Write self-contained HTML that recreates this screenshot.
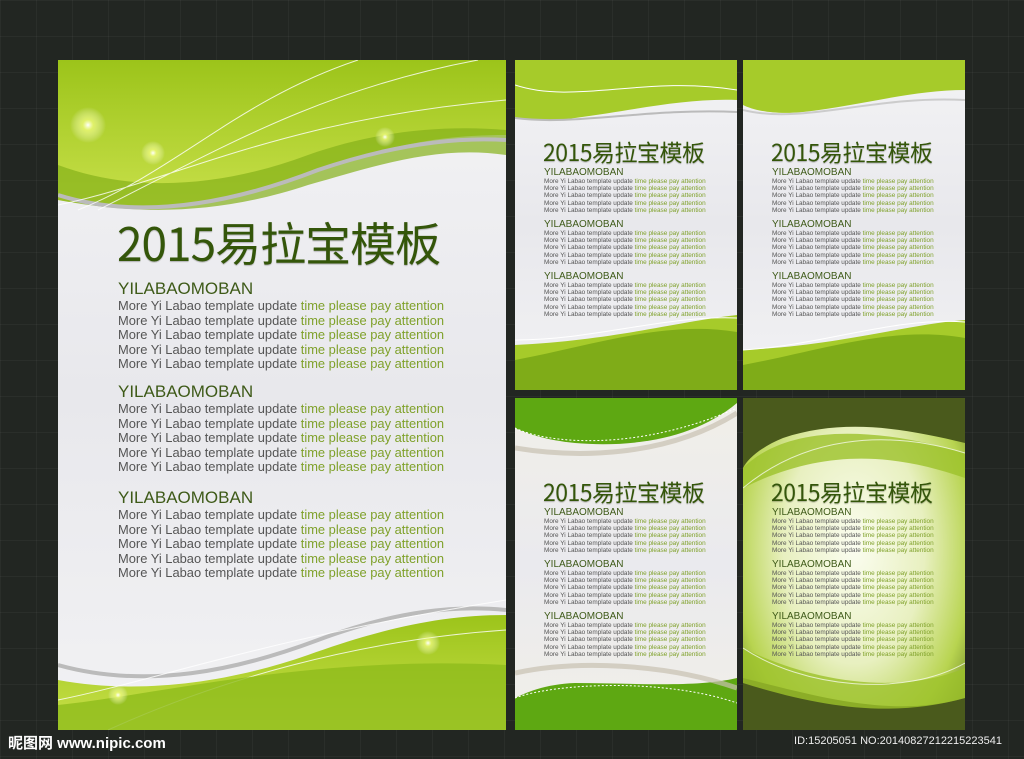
<!DOCTYPE html>
<html><head><meta charset="utf-8">
<style>
*{margin:0;padding:0}
body{width:1024px;height:759px;overflow:hidden;position:relative;font-family:"Liberation Sans","Noto Sans CJK SC",sans-serif;
background:#222622;
background-image:linear-gradient(90deg,rgba(255,255,255,.035) 1px,transparent 1px),linear-gradient(rgba(255,255,255,.035) 1px,transparent 1px);background-size:36px 36px;}
.p{position:absolute;overflow:hidden;background:linear-gradient(#f3f3f5,#e8e8ec 50%,#f2f2f4)}
.p svg{position:absolute;left:0;top:0;width:100%;height:100%}
.t{position:absolute;color:#34560a;font-family:"Noto Sans CJK SC",sans-serif;white-space:nowrap;
text-shadow:0 1px 1px rgba(0,0,0,.25)}
.b{position:absolute;white-space:nowrap}
.h{color:#3e5a18}
.l{color:#555}
.l span{color:#7fa12a}
.big .h{font-size:17px;line-height:20px}
.big .l{font-size:12.9px;line-height:14.6px}
.sm .h{font-size:10px;line-height:11px}
.sm .l{font-size:6.4px;line-height:7.2px}
.foot{position:absolute;color:#fff;font-size:15px;font-weight:bold;left:8px;top:732px}
.id{position:absolute;color:#eee;font-size:11px;right:22px;top:735px}
</style></head><body>

<div class="p big" style="left:58px;top:60px;width:448px;height:670px">
<svg viewBox="0 0 448 670" preserveAspectRatio="none">
<defs>
<linearGradient id="g1" x1="0" y1="0" x2="0" y2="1"><stop offset="0" stop-color="#9cc41a"/><stop offset="1" stop-color="#c8e04a"/></linearGradient>
<radialGradient id="gl"><stop offset="0" stop-color="#fff" stop-opacity="1"/><stop offset=".3" stop-color="#f4ff80" stop-opacity=".7"/><stop offset="1" stop-color="#fff" stop-opacity="0"/></radialGradient>
</defs>
<path d="M0 0H448V75C380 75 330 85 250 115C170 145 90 155 0 140Z" fill="url(#g1)"/>
<path d="M0 105C80 135 170 125 250 95C320 70 390 65 448 70V95C380 85 320 105 250 125C160 155 80 155 0 140Z" fill="#84b01a" opacity=".7"/>
<path d="M0 135C80 160 170 145 260 110C340 83 400 77 448 80" stroke="#bbb" stroke-width="4" fill="none"/>
<path d="M20 150C120 110 180 40 300 0M0 145C120 120 220 60 448 40M40 150C160 90 260 30 420 0" stroke="#fff" stroke-width="1" fill="none" opacity=".8"/>
<circle cx="30" cy="65" r="18" fill="url(#gl)"/><circle cx="95" cy="93" r="12" fill="url(#gl)"/><circle cx="327" cy="77" r="10" fill="url(#gl)"/>
<path d="M0 670H448V555C380 555 320 570 250 595C170 623 80 635 0 620Z" fill="url(#g1)"/>
<path d="M0 605C90 630 180 610 260 580C340 550 400 545 448 550" stroke="#bbb" stroke-width="4" fill="none"/>
<path d="M0 640C100 620 200 580 448 540M50 670C160 620 300 580 448 570" stroke="#fff" stroke-width="1" fill="none" opacity=".8"/>
<path d="M0 645C100 635 250 595 448 605V670H0Z" fill="#8fbb1c" opacity=".8"/>
<circle cx="370" cy="583" r="12" fill="url(#gl)"/><circle cx="60" cy="635" r="10" fill="url(#gl)"/>
</svg>
<div class="t" style="left:59px;top:149px;font-size:46px;letter-spacing:-1px">2015易拉宝模板</div>
<div class="b" style="left:60px;top:219px"><div class="h">YILABAOMOBAN</div>
<div class="l">More Yi Labao template update <span>time please pay attention</span><br>More Yi Labao template update <span>time please pay attention</span><br>More Yi Labao template update <span>time please pay attention</span><br>More Yi Labao template update <span>time please pay attention</span><br>More Yi Labao template update <span>time please pay attention</span></div></div>
<div class="b" style="left:60px;top:322px"><div class="h">YILABAOMOBAN</div>
<div class="l">More Yi Labao template update <span>time please pay attention</span><br>More Yi Labao template update <span>time please pay attention</span><br>More Yi Labao template update <span>time please pay attention</span><br>More Yi Labao template update <span>time please pay attention</span><br>More Yi Labao template update <span>time please pay attention</span></div></div>
<div class="b" style="left:60px;top:428px"><div class="h">YILABAOMOBAN</div>
<div class="l">More Yi Labao template update <span>time please pay attention</span><br>More Yi Labao template update <span>time please pay attention</span><br>More Yi Labao template update <span>time please pay attention</span><br>More Yi Labao template update <span>time please pay attention</span><br>More Yi Labao template update <span>time please pay attention</span></div></div>
</div>

<div class="p sm" style="left:515px;top:60px;width:222px;height:330px">
<svg viewBox="0 0 222 330" preserveAspectRatio="none">
<path d="M0 0H222V40C170 38 120 50 60 58C30 62 10 60 0 58Z" fill="#a6cb2a"/>
<path d="M0 25C60 45 130 15 222 30" stroke="#fff" fill="none"/>
<path d="M0 58C60 66 130 48 222 52" stroke="#bbb" stroke-width="2" fill="none"/>
<path d="M0 330H222V255C160 262 100 280 0 285Z" fill="#a6cb2a"/>
<path d="M0 300C80 285 150 260 222 272V330H0Z" fill="#7fac18"/>
<path d="M0 280C80 280 150 255 222 258" stroke="#fff" fill="none"/>
</svg>
<div class="t" style="left:28px;top:74px;font-size:23px;letter-spacing:-.5px">2015易拉宝模板</div>
<div class="b" style="left:29px;top:107px"><div class="h">YILABAOMOBAN</div><div class="l">More Yi Labao template update <span>time please pay attention</span><br>More Yi Labao template update <span>time please pay attention</span><br>More Yi Labao template update <span>time please pay attention</span><br>More Yi Labao template update <span>time please pay attention</span><br>More Yi Labao template update <span>time please pay attention</span></div></div>
<div class="b" style="left:29px;top:159px"><div class="h">YILABAOMOBAN</div><div class="l">More Yi Labao template update <span>time please pay attention</span><br>More Yi Labao template update <span>time please pay attention</span><br>More Yi Labao template update <span>time please pay attention</span><br>More Yi Labao template update <span>time please pay attention</span><br>More Yi Labao template update <span>time please pay attention</span></div></div>
<div class="b" style="left:29px;top:211px"><div class="h">YILABAOMOBAN</div><div class="l">More Yi Labao template update <span>time please pay attention</span><br>More Yi Labao template update <span>time please pay attention</span><br>More Yi Labao template update <span>time please pay attention</span><br>More Yi Labao template update <span>time please pay attention</span><br>More Yi Labao template update <span>time please pay attention</span></div></div>
</div>

<div class="p sm" style="left:743px;top:60px;width:222px;height:330px">
<svg viewBox="0 0 222 330" preserveAspectRatio="none">
<path d="M0 0H222V30C170 30 120 45 60 52C30 55 10 50 0 45Z" fill="#a6cb2a"/>
<path d="M0 50C60 65 130 35 222 40" stroke="#ccc" stroke-width="2" fill="none"/>
<path d="M0 330H222V260C160 265 100 285 0 290Z" fill="#a6cb2a"/>
<path d="M0 305C80 290 150 265 222 278V330H0Z" fill="#7fac18"/>
<path d="M0 290C80 285 150 257 222 262" stroke="#fff" fill="none"/>
</svg>
<div class="t" style="left:28px;top:74px;font-size:23px;letter-spacing:-.5px">2015易拉宝模板</div>
<div class="b" style="left:29px;top:107px"><div class="h">YILABAOMOBAN</div><div class="l">More Yi Labao template update <span>time please pay attention</span><br>More Yi Labao template update <span>time please pay attention</span><br>More Yi Labao template update <span>time please pay attention</span><br>More Yi Labao template update <span>time please pay attention</span><br>More Yi Labao template update <span>time please pay attention</span></div></div>
<div class="b" style="left:29px;top:159px"><div class="h">YILABAOMOBAN</div><div class="l">More Yi Labao template update <span>time please pay attention</span><br>More Yi Labao template update <span>time please pay attention</span><br>More Yi Labao template update <span>time please pay attention</span><br>More Yi Labao template update <span>time please pay attention</span><br>More Yi Labao template update <span>time please pay attention</span></div></div>
<div class="b" style="left:29px;top:211px"><div class="h">YILABAOMOBAN</div><div class="l">More Yi Labao template update <span>time please pay attention</span><br>More Yi Labao template update <span>time please pay attention</span><br>More Yi Labao template update <span>time please pay attention</span><br>More Yi Labao template update <span>time please pay attention</span><br>More Yi Labao template update <span>time please pay attention</span></div></div>
</div>

<div class="p sm" style="left:515px;top:398px;width:222px;height:332px;background:linear-gradient(#f1efe8,#eaeaee 50%,#f1efe8)">
<svg viewBox="0 0 222 332" preserveAspectRatio="none">
<path d="M0 0H222V5C180 40 120 50 60 45C30 42 10 35 0 30Z" fill="#5ea812"/>
<path d="M0 30C30 45 120 55 222 10" stroke="#fff" stroke-dasharray="2 2" fill="none"/>
<path d="M0 50C60 60 150 60 222 15" stroke="#c8c0b0" stroke-width="5" fill="none" opacity=".7"/>
<path d="M0 332H222V280C180 290 120 285 60 285C30 286 10 295 0 300Z" fill="#5ea812"/>
<path d="M0 300C40 285 150 280 222 305" stroke="#fff" stroke-dasharray="2 2" fill="none"/>
<path d="M0 275C60 262 150 265 222 290" stroke="#c8c0b0" stroke-width="5" fill="none" opacity=".7"/>
</svg>
<div class="t" style="left:28px;top:76px;font-size:23px;letter-spacing:-.5px">2015易拉宝模板</div>
<div class="b" style="left:29px;top:109px"><div class="h">YILABAOMOBAN</div><div class="l">More Yi Labao template update <span>time please pay attention</span><br>More Yi Labao template update <span>time please pay attention</span><br>More Yi Labao template update <span>time please pay attention</span><br>More Yi Labao template update <span>time please pay attention</span><br>More Yi Labao template update <span>time please pay attention</span></div></div>
<div class="b" style="left:29px;top:161px"><div class="h">YILABAOMOBAN</div><div class="l">More Yi Labao template update <span>time please pay attention</span><br>More Yi Labao template update <span>time please pay attention</span><br>More Yi Labao template update <span>time please pay attention</span><br>More Yi Labao template update <span>time please pay attention</span><br>More Yi Labao template update <span>time please pay attention</span></div></div>
<div class="b" style="left:29px;top:213px"><div class="h">YILABAOMOBAN</div><div class="l">More Yi Labao template update <span>time please pay attention</span><br>More Yi Labao template update <span>time please pay attention</span><br>More Yi Labao template update <span>time please pay attention</span><br>More Yi Labao template update <span>time please pay attention</span><br>More Yi Labao template update <span>time please pay attention</span></div></div>
</div>

<div class="p sm" style="left:743px;top:398px;width:222px;height:332px;background:radial-gradient(ellipse at 50% 45%,#fbfdf0 0%,#e8f0c0 45%,#b8d450 75%,#56701a 100%)">
<svg viewBox="0 0 222 332" preserveAspectRatio="none">
<path d="M0 0H222V45C160 30 100 20 40 40C20 48 5 60 0 70Z" fill="#4a5a1c"/>
<path d="M0 70C40 30 120 25 222 55V80C150 55 80 50 0 90Z" fill="#9cc22a" opacity=".8"/>
<path d="M0 332H222V300C150 320 80 300 0 280Z" fill="#4a5a1c"/>
<path d="M0 250C60 280 150 300 222 270V300C150 320 80 310 0 285Z" fill="#9cc22a" opacity=".8"/>
<path d="M0 90C60 40 140 30 222 55M0 250C60 290 160 300 222 265" stroke="#fff" fill="none" opacity=".7"/>
</svg>
<div class="t" style="left:28px;top:76px;font-size:23px;letter-spacing:-.5px">2015易拉宝模板</div>
<div class="b" style="left:29px;top:109px"><div class="h">YILABAOMOBAN</div><div class="l">More Yi Labao template update <span>time please pay attention</span><br>More Yi Labao template update <span>time please pay attention</span><br>More Yi Labao template update <span>time please pay attention</span><br>More Yi Labao template update <span>time please pay attention</span><br>More Yi Labao template update <span>time please pay attention</span></div></div>
<div class="b" style="left:29px;top:161px"><div class="h">YILABAOMOBAN</div><div class="l">More Yi Labao template update <span>time please pay attention</span><br>More Yi Labao template update <span>time please pay attention</span><br>More Yi Labao template update <span>time please pay attention</span><br>More Yi Labao template update <span>time please pay attention</span><br>More Yi Labao template update <span>time please pay attention</span></div></div>
<div class="b" style="left:29px;top:213px"><div class="h">YILABAOMOBAN</div><div class="l">More Yi Labao template update <span>time please pay attention</span><br>More Yi Labao template update <span>time please pay attention</span><br>More Yi Labao template update <span>time please pay attention</span><br>More Yi Labao template update <span>time please pay attention</span><br>More Yi Labao template update <span>time please pay attention</span></div></div>
</div>

<div class="foot">昵图网 www.nipic.com</div>
<div class="id">ID:15205051 NO:20140827212215223541</div>
</body></html>
